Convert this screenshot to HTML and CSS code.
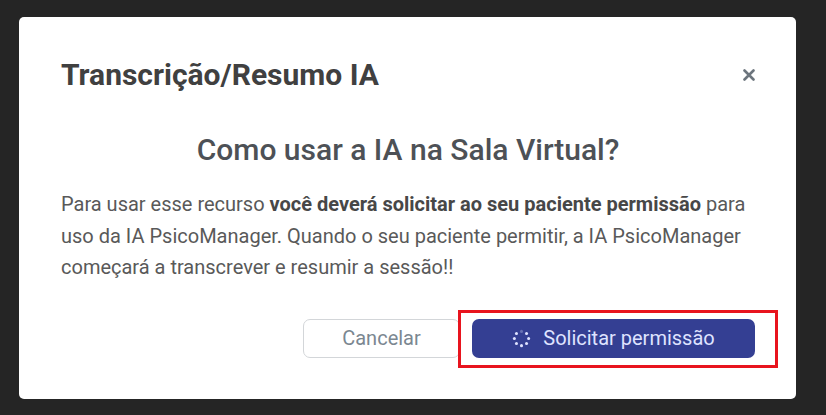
FILE: index.html
```html
<!DOCTYPE html>
<html lang="pt-BR">
<head>
<meta charset="utf-8">
<title>Transcrição/Resumo IA</title>
<link rel="stylesheet" href="styles.css">
</head>
<body>
<div class="backdrop">
  <div class="modal">
    <div class="modal-header">
      <h2 class="modal-title">Transcrição/Resumo IA</h2>
      <button class="close" aria-label="Fechar">
        <svg width="12" height="12" viewBox="0 0 12 12"><path d="M1.5 1.5 L10.5 10.5 M10.5 1.5 L1.5 10.5" stroke="#6c757d" stroke-width="2.6" stroke-linecap="round"/></svg>
      </button>
    </div>
    <h3 class="question">Como usar a IA na Sala Virtual?</h3>
    <p class="text">Para usar esse recurso <strong>você deverá solicitar ao seu paciente permissão</strong> para uso da IA PsicoManager. Quando o seu paciente permitir, a IA PsicoManager começará a transcrever e resumir a sessão!!</p>
    <div class="footer">
      <button class="btn btn-cancel">Cancelar</button>
      <div class="highlight-wrap">
        <button class="btn btn-primary">
          <svg class="spinner" width="19" height="19" viewBox="0 0 20 20">
            <circle cx="10" cy="2.5" r="1.6" fill="#dfe3ff" opacity="0.3"/>
            <circle cx="15.3" cy="4.7" r="1.6" fill="#dfe3ff"/>
            <circle cx="17.5" cy="10" r="1.6" fill="#dfe3ff"/>
            <circle cx="15.3" cy="15.3" r="1.6" fill="#dfe3ff"/>
            <circle cx="10" cy="17.5" r="1.6" fill="#dfe3ff"/>
            <circle cx="4.7" cy="15.3" r="1.6" fill="#dfe3ff"/>
            <circle cx="2.5" cy="10" r="1.6" fill="#dfe3ff"/>
            <circle cx="4.7" cy="4.7" r="1.6" fill="#dfe3ff"/>
          </svg>
          <span>Solicitar permissão</span>
        </button>
        <span class="highlight"></span>
      </div>
    </div>
  </div>
</div>
</body>
</html>
```
FILE: styles.css
```css
* { box-sizing: border-box; }
html, body {
  margin: 0;
  padding: 0;
  background: #252525;
  font-family: Roboto, "Liberation Sans", Arial, sans-serif;
}
.backdrop {
  width: 826px;
  height: 415px;
  padding: 17px 30px 0 19px;
}
.modal {
  width: 777px;
  height: 382px;
  background: #fff;
  border-radius: 5px;
  padding: 0 41px 0 42px;
}
.modal-header {
  display: flex;
  justify-content: space-between;
  align-items: flex-start;
  padding-top: 40px;
  height: 115px;
}
.modal-title {
  margin: 0;
  font-size: 30px;
  line-height: 36px;
  font-weight: 700;
  color: #404040;
}
.close {
  border: 0;
  background: none;
  padding: 0;
  margin: 12px 0 0 0;
  width: 12px;
  height: 12px;
  display: flex;
  cursor: pointer;
}
.question {
  margin: 0;
  text-align: center;
  font-size: 30px;
  line-height: 36px;
  font-weight: 500;
  color: #4d5156;
}
.text {
  margin: 21px 0 0 0;
  font-size: 20px;
  line-height: 31.5px;
  color: #595959;
}
.text strong {
  font-weight: 700;
  color: #474747;
}
.footer {
  display: flex;
  justify-content: flex-end;
  align-items: center;
  gap: 12px;
  margin-top: 35px;
}
.btn {
  height: 39px;
  border-radius: 7px;
  font-family: inherit;
  font-size: 20px;
  cursor: pointer;
  display: flex;
  align-items: center;
  justify-content: center;
}
.btn-cancel {
  width: 157px;
  background: #fff;
  border: 1px solid #d3d6d9;
  color: #7b8791;
}
.highlight-wrap {
  position: relative;
}
.btn-primary {
  width: 283px;
  background: #343f93;
  border: 0;
  color: #dfe3ff;
  gap: 12px;
}
.spinner { display: block; }
.highlight {
  position: absolute;
  left: -14px;
  top: -9px;
  right: -23px;
  bottom: -10px;
  border: 3px solid #e8141e;
  pointer-events: none;
}
```
